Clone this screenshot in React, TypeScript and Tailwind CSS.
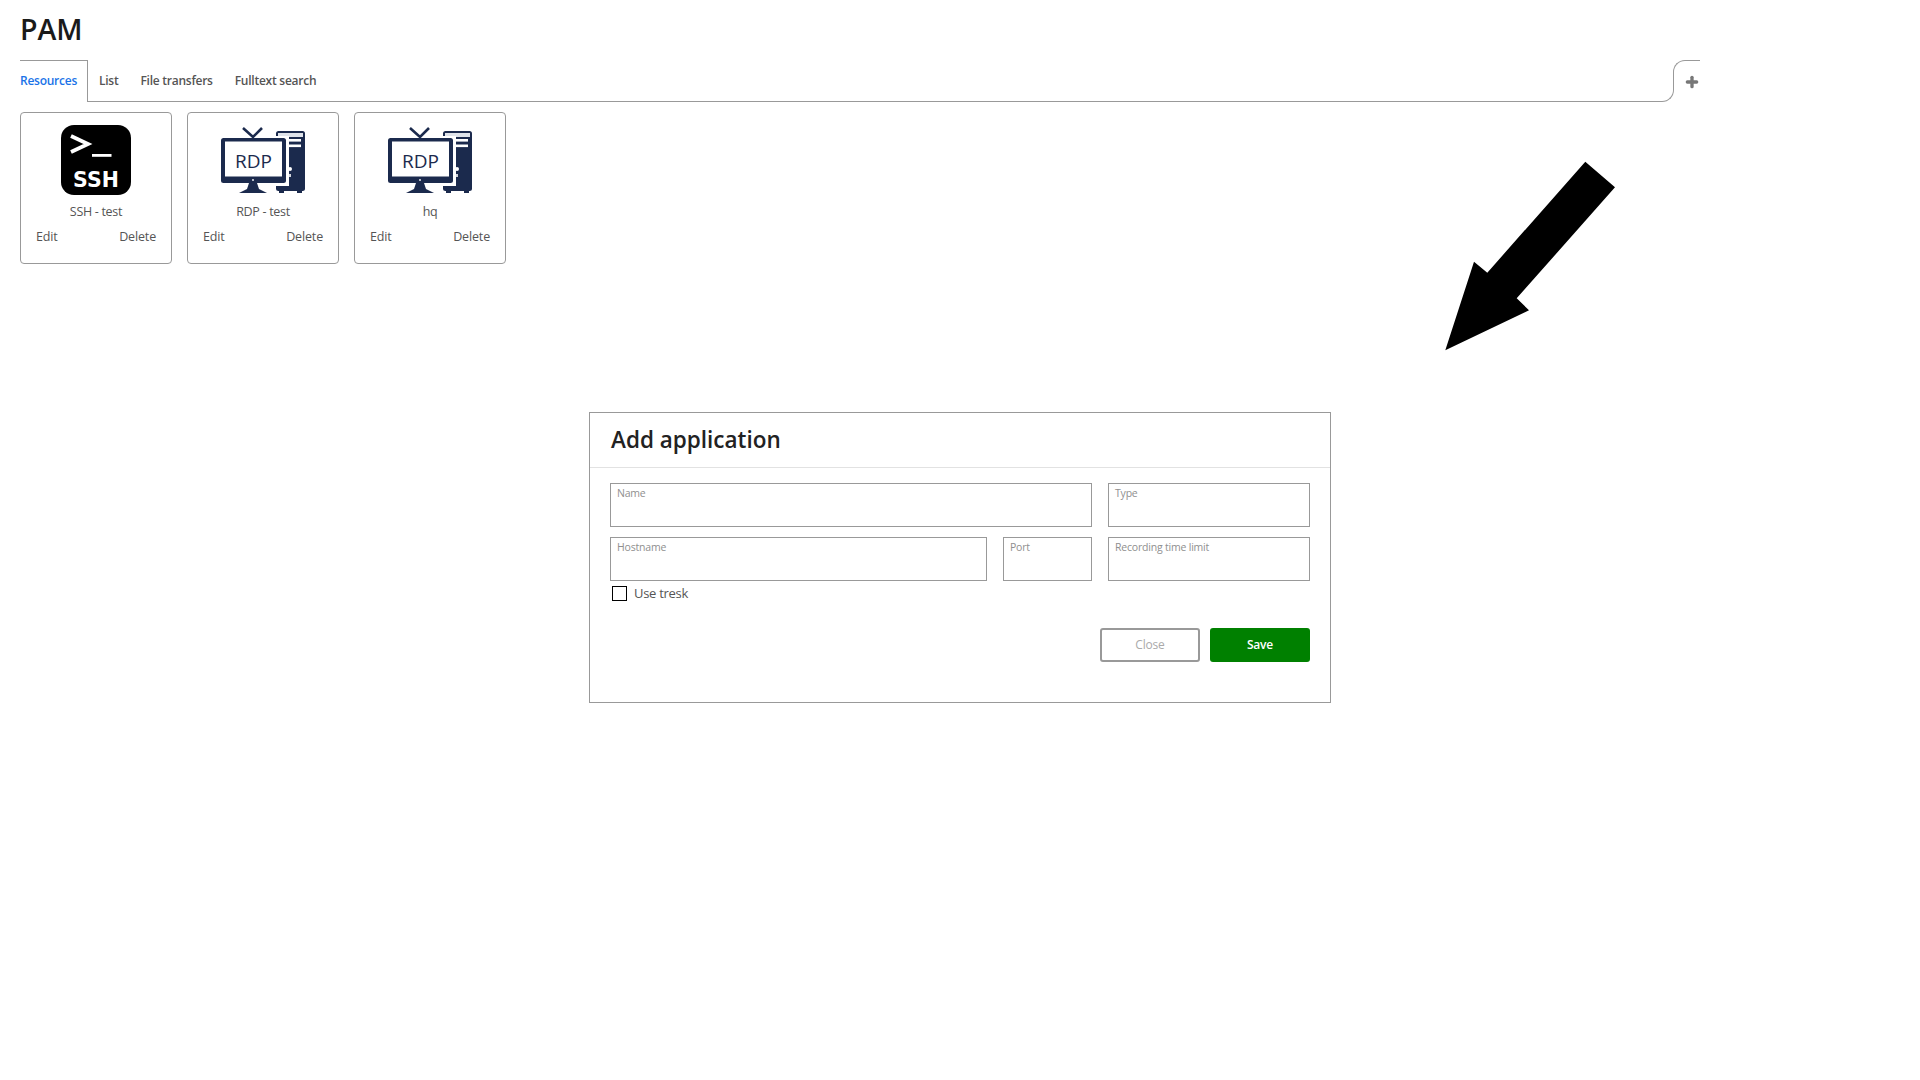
import { Plus } from 'lucide-react';

const font = { sans: '"Open Sans", "Noto Sans", sans-serif' };

function SshIcon() {
  return (
    <svg width="70" height="70" viewBox="0 0 70 70" className="block">
      <rect width="70" height="70" rx="13" fill="#000" />
      <polyline points="10,11 27,19 10,27" fill="none" stroke="#fff" strokeWidth="3.8" />
      <rect x="31" y="29" width="19.5" height="2.8" fill="#fff" />
      <text x="35" y="61.5" textAnchor="middle" fill="#fff" fontSize="20.5" fontWeight="700" fontFamily='"DejaVu Sans", sans-serif'>SSH</text>
    </svg>
  );
}

function RdpIcon() {
  const navy = '#1b2a4d';
  return (
    <svg width="84" height="67" viewBox="0 0 84 67" className="block">
      {/* tower */}
      <rect x="55" y="4" width="29" height="60" rx="2.5" fill={navy} />
      <rect x="57" y="6" width="25" height="4" fill="#dfe3ea" />
      <rect x="62" y="12" width="18" height="2.6" fill="#fff" />
      <rect x="62" y="17.5" width="18" height="2.6" fill="#fff" />
      <circle cx="69" cy="42" r="2" fill="#fff" />
      <rect x="68.2" y="47" width="1.6" height="3" fill="#fff" />
      <rect x="58" y="63" width="5" height="3" fill={navy} />
      <rect x="76" y="63" width="5" height="3" fill={navy} />
      {/* antenna */}
      <path d="M22 1 L32 10 L41 1" fill="none" stroke={navy} strokeWidth="2.6" />
      {/* monitor */}
      <rect x="48" y="9" width="20" height="50" fill="#fff" />
      <rect x="0" y="11" width="65" height="45" rx="2.5" fill={navy} />
      <rect x="4" y="14.5" width="57" height="35" fill="#fff" />
      <circle cx="32" cy="53" r="0.9" fill="#fff" />
      <path d="M28 56 H36 L38 62 L46 66 H18 L26 62 Z" fill={navy} />
      <text x="32.5" y="40.5" textAnchor="middle" fill={navy} fontSize="19" fontWeight="500" fontFamily={font.sans}>RDP</text>
    </svg>
  );
}

function ResourceCard({ name, icon }: { name: string; icon: React.ReactNode }) {
  return (
    <div className="w-[152px] h-[152px] rounded-[4px] border border-[#999] flex flex-col items-center pt-[12px] px-[15px]">
      <div className="h-[70px] flex items-center justify-center">{icon}</div>
      <div className="mt-[8px] text-[12.5px] leading-[18px] tracking-[-0.3px] text-[#555]">{name}</div>
      <div className="mt-[7px] w-full flex justify-between text-[12.5px] leading-[18px] tracking-[-0.15px] text-[#555]">
        <a>Edit</a>
        <a>Delete</a>
      </div>
    </div>
  );
}

function Field({ label, className }: { label: string; className: string }) {
  return (
    <div className={`h-[44px] border border-[#999] px-[6px] pt-[1px] text-[10.5px] leading-[16px] tracking-[-0.2px] text-[#8f8f8f] ${className}`}>
      {label}
    </div>
  );
}

export default function App() {
  return (
    <div className="relative min-h-screen bg-white px-5" style={{ fontFamily: font.sans }}>
      <h1 className="pt-[9px] h-[60px] text-[28.5px] leading-[40px] font-semibold text-[#1a1a1a]">PAM</h1>

      {/* Tabs */}
      <div className="flex h-[42px] w-[1680px] text-[12px] tracking-[-0.25px] font-semibold text-[#555]">
        <div className="w-[68px] border-t border-r border-[#999] flex items-center pb-[2px] text-[#1a73e8]">Resources</div>
        <div className="flex-1 flex items-center gap-[22px] pl-[11px] border-b border-[#999]">
          <span>List</span>
          <span>File transfers</span>
          <span>Fulltext search</span>
        </div>
        {/* S-curve between the tab strip and the add button */}
        <div className="w-[12px] h-[21px] self-end border-b border-r border-[#999] rounded-br-xl" />
        <div className="w-[27px] h-[22px] -ml-px border-t border-l border-[#999] rounded-tl-xl flex items-center pl-[10px]">
          <Plus size={16} strokeWidth={5} className="mt-[20px] text-[#777]" />
        </div>
      </div>

      {/* Resource cards */}
      <div className="mt-[10px] flex gap-[15px]">
        <ResourceCard name="SSH - test" icon={<SshIcon />} />
        <ResourceCard name="RDP - test" icon={<RdpIcon />} />
        <ResourceCard name="hq" icon={<RdpIcon />} />
      </div>

      {/* Dialog */}
      <div className="mt-[148px] mx-auto w-[742px] h-[291px] border border-[#999]">
        <div className="h-[55px] px-[21px] flex items-center border-b border-[#e2e2e2]">
          <h2 className="text-[22.5px] font-semibold text-[#222]">Add application</h2>
        </div>
        <div className="px-[20px] pt-[15px]">
          <div className="flex gap-[16px]">
            <Field label="Name" className="flex-1" />
            <Field label="Type" className="w-[202px]" />
          </div>
          <div className="mt-[10px] flex gap-[16px]">
            <Field label="Hostname" className="flex-1" />
            <Field label="Port" className="w-[89px]" />
            <Field label="Recording time limit" className="w-[202px]" />
          </div>
          <label className="mt-[5px] ml-[2px] flex items-center gap-[7px] h-[15px] text-[13px] tracking-[-0.3px] text-[#555]">
            <span className="w-[15px] h-[15px] border border-black" />
            Use tresk
          </label>
          <div className="mt-[27px] flex justify-end gap-[10px] text-[12px] tracking-[-0.2px]">
            <button className="w-[100px] h-[34px] rounded-[3px] border-2 border-[#999] text-[#aaa]">Close</button>
            <button className="w-[100px] h-[34px] rounded-[3px] bg-[#008000] text-white font-semibold">Save</button>
          </div>
        </div>
      </div>

      {/* Annotation arrow over the page */}
      <svg className="absolute left-[1440px] top-[155px]" width="180" height="200" viewBox="1440 155 180 200">
        <polygon points="1585.3,161.7 1615,187.3 1516.7,298.3 1529,310.3 1445.3,350.3 1474,261.7 1487.3,272.7" fill="#000" />
      </svg>
    </div>
  );
}
